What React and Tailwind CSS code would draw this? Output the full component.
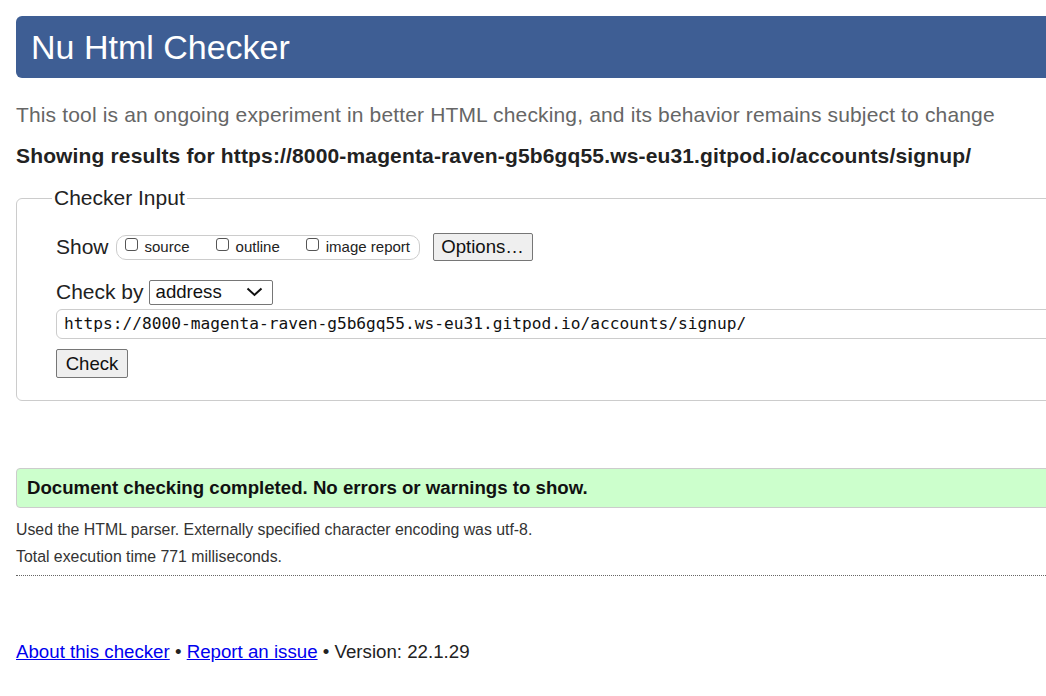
export default function App() {
  const sans = { fontFamily: '"Liberation Sans", Arial, sans-serif' };
  return (
    <div className="w-[1046px] h-[696px] overflow-hidden bg-white text-[#222]" style={sans}>
      <div className="w-[1100px] pl-4 pt-4">
        <header className="h-[62px] bg-[#3e5e94] rounded-l-md flex items-center pl-[15px]">
          <h1 className="text-[34px] text-white leading-none font-normal">Nu Html Checker</h1>
        </header>
        <p className="mt-[25px] text-[21px] leading-[24px] tracking-[0.15px] text-[#666] whitespace-nowrap">
          This tool is an ongoing experiment in better HTML checking, and its behavior remains subject to change
        </p>
        <p className="mt-[18px] text-[21px] leading-[22px] tracking-[0.15px] font-bold text-[#222] whitespace-nowrap">
          Showing results for https://8000-magenta-raven-g5b6gq55.ws-eu31.gitpod.io/accounts/signup/
        </p>
        <fieldset className="mt-[19px] border border-[#ccc] rounded-md pl-[39px] h-[215px]">
          <legend className="text-[21px] px-[2px] ml-[-4px] leading-[24px] text-[#222]">Checker Input</legend>
          <div className="flex items-center mt-[23px] h-[28px]">
            <span className="text-[21px] text-[#222]">Show</span>
            <div className="ml-[7px] h-[25px] w-[304px] border border-[#ccc] rounded-[10px] flex items-center pl-[8px] text-[15px] text-[#222]">
              <span className="w-[13px] h-[13px] border border-[#555] rounded-[3px] mb-[5px]"></span>
              <span className="ml-[7px]">source</span>
              <span className="ml-[26px] w-[13px] h-[13px] border border-[#555] rounded-[3px] mb-[5px]"></span>
              <span className="ml-[7px]">outline</span>
              <span className="ml-[26px] w-[13px] h-[13px] border border-[#555] rounded-[3px] mb-[5px]"></span>
              <span className="ml-[7px]">image report</span>
            </div>
            <div className="ml-[13px] h-[28px] w-[100px] border border-[#767676] rounded-[2px] bg-[#efefef] flex items-center justify-center text-[18.6px] text-[#111]">
              Options…
            </div>
          </div>
          <div className="flex items-center mt-[18px] h-[26px]">
            <span className="text-[21px] text-[#222]">Check by</span>
            <div className="ml-[5px] h-[25px] w-[124px] border border-[#767676] rounded-[2px] flex items-center pl-[6px] pr-[9px] justify-between text-[18.6px] text-[#111]">
              <span>address</span>
              <svg width="17" height="10" viewBox="0 0 17 10" fill="none" stroke="#111" strokeWidth="2">
                <path d="M1.5 1.5 L8.5 8 L15.5 1.5" />
              </svg>
            </div>
          </div>
          <div
            className="mt-[4px] h-[30px] border border-[#ccc] rounded-[6px] flex items-center pl-[7px] text-[16.2px] text-[#111] whitespace-nowrap"
            style={{ fontFamily: '"DejaVu Sans Mono", "Liberation Mono", monospace' }}
          >
            https://8000-magenta-raven-g5b6gq55.ws-eu31.gitpod.io/accounts/signup/
          </div>
          <div className="mt-[10px] h-[29px] w-[72px] border border-[#767676] rounded-[2px] bg-[#efefef] flex items-center justify-center text-[18.6px] text-[#111]">
            Check
          </div>
        </fieldset>
        <div className="mt-[67px] h-[40px] bg-[#ccffcc] border border-[#ccc] rounded-l-[4px] flex items-center pl-[10px]">
          <span className="text-[18.65px] font-bold text-[#111]">Document checking completed. No errors or warnings to show.</span>
        </div>
        <p className="mt-[12px] text-[15.85px] leading-[20px] text-[#333]">
          Used the HTML parser. Externally specified character encoding was utf-8.
        </p>
        <p className="mt-[7px] text-[15.85px] leading-[20px] text-[#333]">Total execution time 771 milliseconds.</p>
        <div className="mt-[8px] border-t border-dotted border-[#666]"></div>
        <p className="mt-[65px] text-[18.7px] leading-[22px] text-[#222]">
          <a className="text-[#0000ee] underline">About this checker</a> •{" "}
          <a className="text-[#0000ee] underline">Report an issue</a> • Version: 22.1.29
        </p>
      </div>
    </div>
  );
}
